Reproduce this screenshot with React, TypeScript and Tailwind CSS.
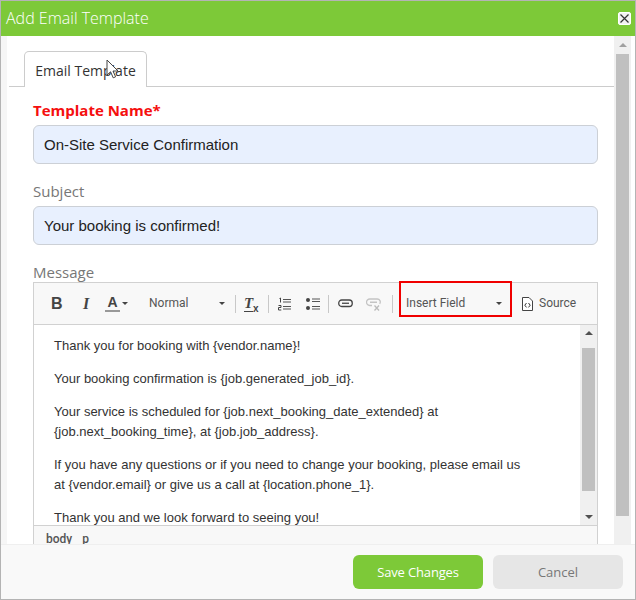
import * as React from "react";

const openSans = "font-['Open_Sans',sans-serif]";
const roboto = "font-['Roboto',sans-serif]";

function Caret({ className = "" }: { className?: string }) {
  return <span className={`w-0 h-0 border-x-[3px] border-x-transparent border-t-[3px] border-t-[#444] ${className}`} />;
}

function Sep() {
  return <span className="block w-px h-[18px] bg-[#c8c8c8] shrink-0" />;
}

function ArrowUp() {
  return <span className="w-0 h-0 border-x-[4px] border-x-transparent border-b-[4px] border-b-[#505050]" />;
}

function ArrowDown() {
  return <span className="w-0 h-0 border-x-[4px] border-x-transparent border-t-[4px] border-t-[#505050]" />;
}

function OrderedList() {
  return (
    <svg width="14" height="14" viewBox="0 0 14 14" fill="none" aria-hidden>
      <path d="M5 2.5h8M5 5h8M5 9.5h8M5 12h8" stroke="#555" strokeWidth="1" />
      <path d="M1.5 1.5l1-.5v4.5M.5 8.5h2.5v2H.5v2.5h2.8" stroke="#444" strokeWidth="1" />
    </svg>
  );
}

function BulletList() {
  return (
    <svg width="14" height="14" viewBox="0 0 14 14" fill="none" aria-hidden>
      <circle cx="2" cy="3" r="2" fill="#444" />
      <circle cx="2" cy="11" r="2" fill="#444" />
      <path d="M6 2h8M6 4.5h8M6 9.5h8M6 12h8" stroke="#555" strokeWidth="1" />
    </svg>
  );
}

function LinkIcon() {
  return (
    <svg width="15" height="9" viewBox="0 0 15 9" fill="none" aria-hidden>
      <rect x="0.75" y="1" width="13.5" height="6.5" rx="3" stroke="#444" strokeWidth="1.3" />
      <path d="M4 4.25h7" stroke="#444" strokeWidth="1.3" />
    </svg>
  );
}

function UnlinkIcon() {
  return (
    <svg width="15" height="13" viewBox="0 0 15 13" fill="none" aria-hidden>
      <path d="M6 7.5H3.75a3 3 0 010-6.5h7.5a3 3 0 012.4 4.8M4 4.25h7" stroke="#c4c4c4" strokeWidth="1.3" />
      <path d="M8.5 7.5l4.5 5M13 7.5l-4.5 5" stroke="#bbb" strokeWidth="1.3" />
    </svg>
  );
}

function SourceIcon() {
  return (
    <svg width="11" height="14" viewBox="0 0 11 14" fill="none" aria-hidden>
      <path d="M.5.5h6.5l3.5 3.5v9.5h-10z" stroke="#444" strokeWidth="1" fill="#fff" />
      <path d="M4.5 6L2.8 8.2l1.7 2.2M6.5 6l1.7 2.2-1.7 2.2" stroke="#333" strokeWidth="1" />
    </svg>
  );
}

function Cursor() {
  return (
    <svg className="absolute left-[105px] top-[58px]" width="14" height="20" viewBox="0 0 14 20" aria-hidden>
      <path d="M1 1v15l3.6-3.2 2.6 6 2.4-1-2.6-5.8H12z" fill="#fff" stroke="#444" strokeWidth="1" strokeLinejoin="round" />
    </svg>
  );
}

function TextField({ value }: { value: string }) {
  return (
    <div className="h-[39px] mr-[16px] flex items-center px-[10px] pt-px rounded-md border border-[#ccd0d6] bg-[#e8f0fe] text-[15px] text-[#222] font-['Liberation_Sans',sans-serif]">
      {value}
    </div>
  );
}

export default function App() {
  return (
    <div className="relative w-[636px] h-[600px] overflow-hidden flex flex-col bg-white border border-[#b4b4b4]">
      {/* title bar */}
      <div className="h-[35px] shrink-0 flex items-center justify-between bg-[#7dc938] pl-[5px] pr-[4px]">
        <span className={`text-[16px] font-light leading-[20px] -mt-[2px] text-white ${openSans}`}>Add Email Template</span>
        <span className="w-[13px] h-[13px] rounded-[2px] bg-[#f2f2f2] border border-white flex items-center justify-center">
          <svg width="9" height="9" viewBox="0 0 9 9" aria-hidden>
            <path d="M.5.5l8 8M8.5.5l-8 8" stroke="#333" strokeWidth="1.2" />
          </svg>
        </span>
      </div>

      {/* body */}
      <div className="flex-1 min-h-0 flex">
        <div className="w-[6px] shrink-0 bg-[#f6f6f6]" />
        <div className="flex-1 min-w-0 pl-[2px] pt-[15px] overflow-hidden">
          <div className="h-[36px] pl-[15px] border-b border-[#ccc]">
            <div className={`w-[123px] h-[36px] flex items-center justify-center pt-[2px] bg-white border border-b-0 border-[#ccc] rounded-t-[5px] text-[14px] text-[#333] ${openSans}`}>
              Email Template
            </div>
          </div>

          <div className="pl-[24px]">
            <div className={`mt-[13px] mb-[5px] text-[15px] font-bold leading-[20px] text-[#f50f0f] ${openSans}`}>Template Name*</div>
            <TextField value="On-Site Service Confirmation" />
            <div className={`mt-[17px] mb-[5px] text-[15px] leading-[20px] text-[#777] ${openSans}`}>Subject</div>
            <TextField value="Your booking is confirmed!" />
            <div className={`mt-[17px] text-[15px] leading-[20px] text-[#777] ${openSans}`}>Message</div>

            {/* editor */}
            <div className="mr-[16px] h-[270px] border border-[#d1d1d1] border-b-0 flex flex-col">
              <div className={`h-[42px] shrink-0 flex items-center bg-[#f8f8f8] border-b border-[#d1d1d1] text-[12px] text-[#555] ${roboto}`}>
                <span className="ml-[17px] w-[12px] text-[16px] font-bold text-[#444] font-['Liberation_Sans',sans-serif]">B</span>
                <span className="ml-[20px] w-[12px] text-[16px] font-bold italic text-[#444] font-['Liberation_Serif',serif]">I</span>
                <span className="ml-[10px] flex flex-col items-center w-[15px] text-[14px] leading-[15px] font-bold text-[#444] font-['Liberation_Sans',sans-serif]">
                  A
                  <span className="w-[15px] h-[2px] bg-[#999]" />
                </span>
                <Caret className="ml-[2px]" />
                <span className="ml-[21px] w-[70px] -mt-[2px]">Normal</span>
                <Caret />
                <span className="ml-[10px]"><Sep /></span>
                <span className="ml-[8px] w-[16px] relative text-[15px] font-bold italic leading-[15px] text-[#444] font-['Liberation_Serif',serif]">
                  T
                  <span className="absolute left-0 bottom-[-1px] w-[9px] h-px bg-[#444]" />
                  <span className="absolute left-[9px] top-[5px] text-[10px] not-italic font-['Liberation_Sans',sans-serif]">x</span>
                </span>
                <span className="ml-[8px]"><Sep /></span>
                <span className="ml-[9px] flex"><OrderedList /></span>
                <span className="ml-[14px] flex"><BulletList /></span>
                <span className="ml-[8px]"><Sep /></span>
                <span className="ml-[9px] flex"><LinkIcon /></span>
                <span className="ml-[13px] flex mt-[1px]"><UnlinkIcon /></span>
                <span className="ml-[11px]"><Sep /></span>
                <div className="ml-[6px] self-start -mt-[2px] w-[113px] h-[36px] flex items-center justify-between pl-[5px] pr-[8px] pt-[7px] border-2 border-[#f00000]">
                  <span>Insert Field</span>
                  <Caret className="mt-[2px]" />
                </div>
                <span className="ml-[10px] flex"><SourceIcon /></span>
                <span className="ml-[6px] -mt-[2px]">Source</span>
              </div>

              <div className="h-[201px] shrink-0 flex border-b border-[#d1d1d1]">
                <div className="flex-1 min-w-0 overflow-hidden pl-[20px] pt-[11px] text-[13px] leading-[20px] text-[#333] font-['Liberation_Sans',sans-serif]">
                  <p>Thank you for booking with {"{vendor.name}"}!</p>
                  <p className="mt-[13px]">Your booking confirmation is {"{job.generated_job_id}"}.</p>
                  <p className="mt-[13px]">Your service is scheduled for {"{job.next_booking_date_extended}"} at<br />{"{job.next_booking_time}"}, at {"{job.job_address}"}.</p>
                  <p className="mt-[13px]">If you have any questions or if you need to change your booking, please email us<br />at {"{vendor.email}"} or give us a call at {"{location.phone_1}"}.</p>
                  <p className="mt-[13px]">Thank you and we look forward to seeing you!</p>
                </div>
                <div className="w-[17px] shrink-0 flex flex-col items-center bg-[#f0f0f0]">
                  <div className="h-[16px] flex items-center justify-center"><ArrowUp /></div>
                  <div className="mt-[7px] w-[13px] h-[143px] bg-[#c0c0c0]" />
                  <div className="mt-auto h-[17px] flex items-center justify-center"><ArrowDown /></div>
                </div>
              </div>

              <div className={`flex-1 min-h-0 overflow-hidden pl-[12px] pt-[6px] bg-[#f8f8f8] text-[12px] font-medium leading-[14px] text-[#555] ${roboto}`}>
                body<span className="ml-[10px]">p</span>
              </div>
            </div>
          </div>
        </div>

        {/* page scrollbar */}
        <div className="w-[17px] shrink-0 flex flex-col items-center bg-[#f0f0f0]">
          <div className="h-[18px] flex items-center justify-center"><span className="w-0 h-0 border-x-[4px] border-x-transparent border-b-[4px] border-b-[#a0a0a0]" /></div>
          <div className="w-[13px] h-[462px] bg-[#c0c0c0]" />
        </div>
        <div className="w-[4px] shrink-0" />
      </div>

      {/* footer */}
      <div className="h-[55px] shrink-0 flex items-start justify-end gap-[10px] pt-[10px] pr-[12px] bg-[#f9f9f9] border-t border-[#efefef]">
        <button type="button" className={`w-[130px] h-[34px] pt-[2px] rounded-[6px] bg-[#7dc938] text-[13px] tracking-[-0.15px] text-white ${openSans}`}>Save Changes</button>
        <button type="button" className={`w-[130px] h-[34px] pt-[2px] rounded-[6px] bg-[#e6e6e6] text-[13px] text-[#777] ${openSans}`}>Cancel</button>
      </div>

      <Cursor />
    </div>
  );
}
